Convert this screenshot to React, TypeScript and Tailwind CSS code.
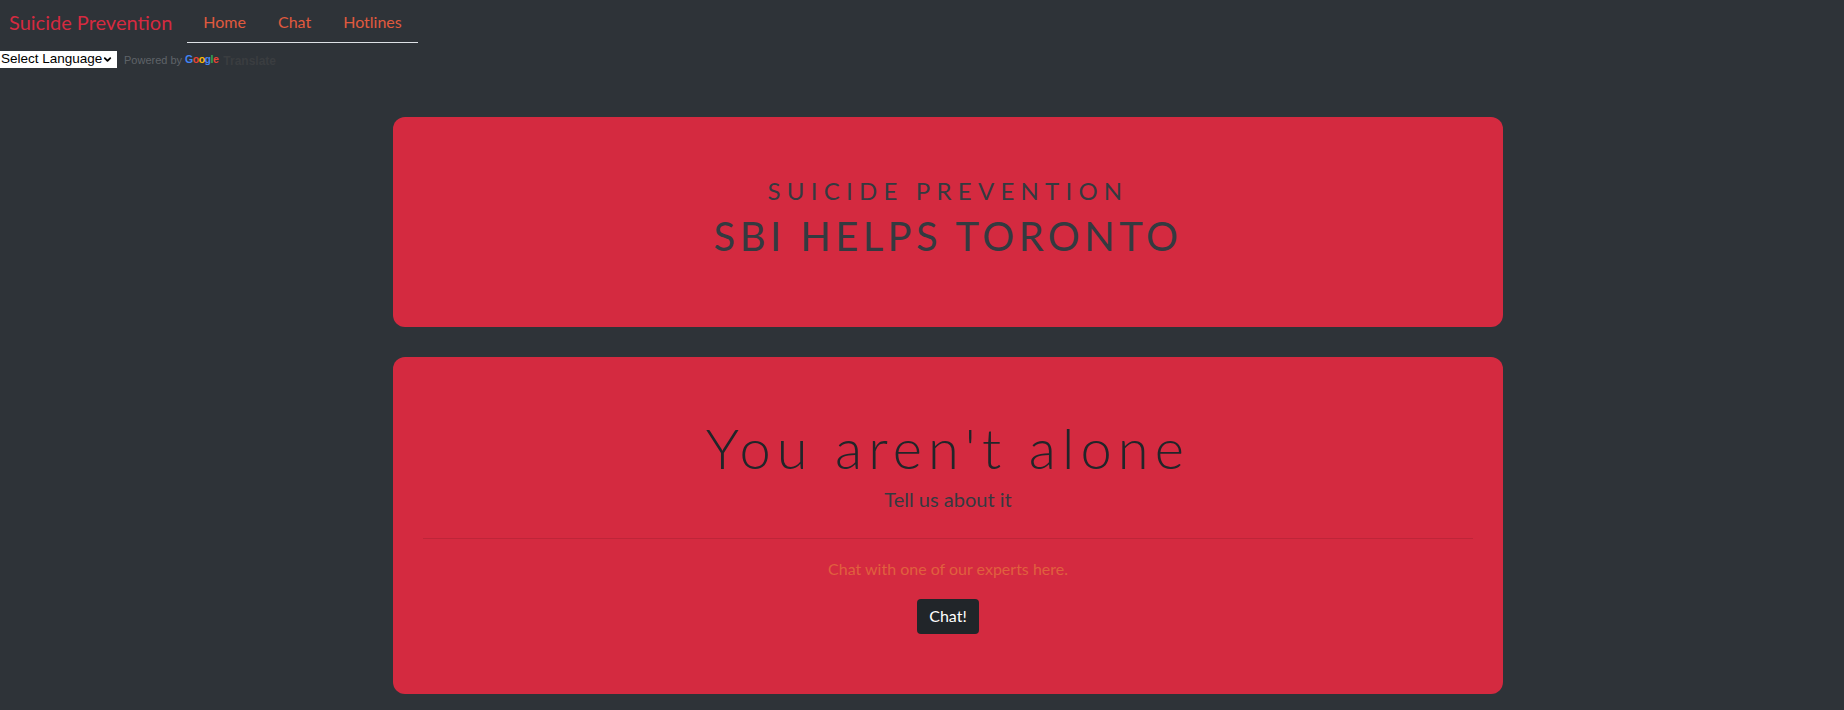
import { ChevronDown } from 'lucide-react'

const links = ['Home', 'Chat', 'Hotlines']

export default function App() {
  return (
    <div className="min-h-screen bg-[#2e3338] font-['Lato',sans-serif]">
      {/* Navbar */}
      <nav className="flex items-start h-[43px]">
        <a className="ml-[9px] mt-[7px] text-[20px] leading-[30px] text-[#d52a40]">Suicide Prevention</a>
        <ul className="ml-[15px] flex border-b border-[#dee2e6]">
          {links.map((l) => (
            <li key={l}>
              <a className="block px-4 pt-[10px] pb-[8px] text-[16px] leading-6 text-[#e05a3e]">{l}</a>
            </li>
          ))}
        </ul>
      </nav>

      {/* Google translate widget */}
      <div className="mt-2 flex items-center h-[17px] whitespace-nowrap font-['Liberation_Sans',Arial,sans-serif]">
        <div className="flex shrink-0 items-center h-[17px] w-[117px] bg-white text-black text-[13.5px] pl-[1px] pr-[4px] justify-between">
          <span>Select Language</span>
          <ChevronDown className="w-[11px] h-[11px] shrink-0" strokeWidth={4} />
        </div>
        <span className="ml-[7px] text-[11px] text-[#5f6368] mt-[2px]">Powered by</span>
        <span className="ml-[3px] text-[10.5px] font-bold tracking-[-0.5px] mt-[1px]">
          <span className="text-[#4285f4]">G</span>
          <span className="text-[#ea4335]">o</span>
          <span className="text-[#fbbc05]">o</span>
          <span className="text-[#4285f4]">g</span>
          <span className="text-[#34a853]">l</span>
          <span className="text-[#ea4335]">e</span>
        </span>
        <span className="ml-[5px] text-[12px] font-bold text-[#3a3d40] mt-[2px]">Translate</span>
      </div>

      {/* Header card */}
      <section className="ml-[393px] mt-[49px] w-[1110px] rounded-xl bg-[#d42a40] pt-[60px] pb-[59px] text-center text-[#343a40]">
        <h4 className="text-[24px] leading-[1.2] tracking-[0.26em] mb-[6px]">SUICIDE PREVENTION</h4>
        <h1 className="text-[40px] leading-[1.2] tracking-[0.11em] mb-2">SBI HELPS TORONTO</h1>
      </section>

      {/* Chat card */}
      <section className="ml-[393px] mt-[30px] w-[1110px] rounded-xl bg-[#d42a40] px-[30px] pt-[57px] pb-[60px] text-center">
        <h1 className="text-[56px] font-light leading-[1.2] tracking-[0.11em] text-[#212529] mb-[3px]">You aren't alone</h1>
        <p className="text-[20px] leading-[30px] text-[#343a40]">Tell us about it</p>
        <hr className="mt-6 border-t border-black/10" />
        <p className="mt-[18px] text-[16px] leading-6 text-[#e0603e]">Chat with one of our experts here.</p>
        <button className="mt-[18px] h-[35px] px-3 rounded bg-[#212529] text-white text-[16px]">Chat!</button>
      </section>
    </div>
  )
}
